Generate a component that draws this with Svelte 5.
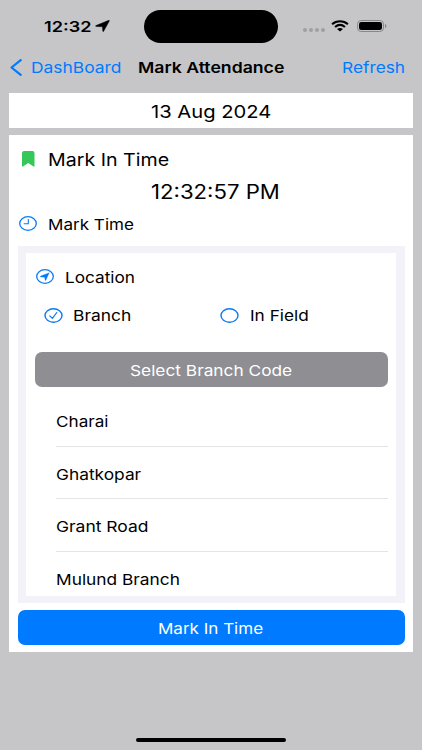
<script>
  const branches = [
    { name: 'Charai', width: 52.5 },
    { name: 'Ghatkopar', width: 85.5 },
    { name: 'Grant Road', width: 92 },
    { name: 'Mulund Branch', width: 123.5 }
  ];
  let mode = $state('branch');

  // Stretches a label horizontally so that it fills its slot.
  function fit(node, width) {
    node.style.transform = `translateY(1px) scaleX(${width / node.offsetWidth})`;
  }
</script>

{#snippet label(text, width)}
  <span class="label" style:width="{width}px"><span class="glyphs" use:fit={width}>{text}</span></span>
{/snippet}

<div class="screen">
  <header class="status">
    <div class="clock">
      {@render label('12:32', 47)}
      <svg class="arrow" width="15" height="12" viewBox="0 0 15 12"><path d="M13.7.3Q14.7 0 14.3 1L8.8 11.1Q8 12.3 7.7 10.9L7.4 6.7 1.2 6.5Q-.2 6.2 1 5.5Z" stroke="#000" stroke-width=".4" /></svg>
    </div>
    <div class="island"></div>
    <div class="signals">
      <div class="dots"><i></i><i></i><i></i><i></i></div>
      <svg class="wifi" width="18" height="12" viewBox="0 0 18 12">
        <path d="M1.1 4.2C5.5.2 12.5.2 16.9 4.2M4 7C7 4.5 11 4.5 14 7" fill="none" stroke="#000" stroke-width="2.1" />
        <path d="M6 8.9Q9 6.9 12 8.9L9 11.5Z" />
      </svg>
      <svg class="battery" width="30" height="12" viewBox="0 0 30 12">
        <rect x=".5" y=".5" width="26" height="11" rx="3.6" fill="none" stroke="#88888a" />
        <rect x="2" y="2" width="23" height="8" rx="2.3" />
        <path d="M28 4Q29.5 4.5 29.5 6T28 8Z" fill="#88888a" />
      </svg>
    </div>
  </header>

  <nav>
    <button class="back">
      <svg width="12" height="17" viewBox="0 0 12 17"><path d="M10.7 1.1 1.5 8.5 10.7 15.9" fill="none" stroke="#007aff" stroke-width="2.2" stroke-linecap="round" stroke-linejoin="round" /></svg>
      {@render label('DashBoard', 90.5)}
    </button>
    <strong>{@render label('Mark Attendance', 146)}</strong>
    <button class="refresh">{@render label('Refresh', 63.5)}</button>
  </nav>

  <section class="date">{@render label('13 Aug 2024', 120.5)}</section>

  <section class="card">
    <div class="heading">
      <svg width="13" height="16" viewBox="0 0 13 16"><path d="M0 2Q0 0 2.2 0H10.3Q12.5 0 12.5 2V15Q12.5 16.4 11.2 15.3L6.25 12 1.3 15.3Q0 16.4 0 15Z" fill="#34c759" /></svg>
      {@render label('Mark In Time', 121.5)}
    </div>
    <div class="now">{@render label('12:32:57 PM', 129)}</div>
    <div class="marktime">
      <svg width="18" height="15" viewBox="0 0 18 15"><g fill="none" stroke="#0a7bf5"><ellipse cx="9" cy="7.5" rx="8.3" ry="6.8" stroke-width="1.3" /><path d="M9.3 3.1V7.8H4.7" stroke-width="1.1" /></g></svg>
      {@render label('Mark Time', 86.5)}
    </div>

    <div class="panel">
      <div class="inner">
        <div class="location">
          <svg width="18" height="15" viewBox="0 0 18 15"><ellipse cx="9" cy="7.5" rx="8.3" ry="6.8" fill="none" stroke="#0a7bf5" stroke-width="1.3" /><path d="M13.3 3.7 9.8 11.3Q9.3 12 9.1 11.1L8.7 8.2 4.7 7.9Q3.7 7.6 4.6 7.1Z" fill="#007aff" stroke="#007aff" stroke-width=".3" /></svg>
          {@render label('Location', 70)}
        </div>
        <div class="options">
          {#each [{ id: 'branch', text: 'Branch', width: 58 }, { id: 'field', text: 'In Field', width: 58.5 }] as option}
            <button class="option" onclick={() => (mode = option.id)}>
              <svg width="19" height="15" viewBox="0 0 19 15"><g fill="none" stroke="#0a7bf5"><ellipse cx="9.5" cy="7.5" rx="8.5" ry="6.8" stroke-width="1.4" />{#if mode === option.id}<path d="M5.8 7.8 8.4 10.4 12.8 4.5" stroke-width="1.2" stroke-linecap="round" stroke-linejoin="round" />{/if}</g></svg>
              {@render label(option.text, option.width)}
            </button>
          {/each}
        </div>
        <button class="select">{@render label('Select Branch Code', 162.5)}</button>
        <ul>
          {#each branches as branch}
            <li>{@render label(branch.name, branch.width)}</li>
          {/each}
        </ul>
      </div>
    </div>
    <button class="submit">{@render label('Mark In Time', 105.5)}</button>
  </section>

  <div class="home"></div>
</div>

<style>
  :global(body) { margin: 0; }
  * { box-sizing: border-box; }
  .screen {
    width: 422px; height: 750px; overflow: hidden;
    display: flex; flex-direction: column;
    background: #c6c6c8; color: #000;
    font: 15px/20px Inter, "Liberation Sans", sans-serif;
  }
  .label { display: inline-block; flex: none; white-space: nowrap; text-align: left; }
  .glyphs { display: inline-block; transform-origin: 0 50%; }
  svg { display: block; flex: none; }
  button { border: 0; padding: 0; margin: 0; background: none; font: inherit; color: #007aff; }
  .status { height: 52px; display: flex; align-items: center; flex: none; padding-left: 43.5px; }
  .clock { width: 100.5px; display: flex; align-items: center; font-weight: 600; }
  .arrow { margin-left: 4px; }
  .island { width: 134px; height: 33px; border-radius: 17px; background: #000; }
  .signals { display: flex; align-items: center; margin-left: 25px; }
  .dots { display: flex; gap: 2px; margin-top: 8px; }
  .dots i { width: 4px; height: 4px; border-radius: 50%; background: #a0a0a2; }
  .wifi { margin-left: 6px; }
  .battery { margin-left: 8px; }
  nav { height: 30px; margin-bottom: 11px; display: flex; align-items: center; flex: none; padding-left: 10px; }
  .back { display: flex; align-items: center; gap: 9px; width: 127.5px; }
  strong { width: 204px; font-weight: 600; }
  .date {
    height: 35px; margin: 0 9px 7px; flex: none; background: #fff;
    display: flex; justify-content: center; align-items: center; font-size: 17.6px;
  }
  .card { height: 517px; margin: 0 9px; padding: 8px 8.5px 7px; flex: none; background: #fff; display: flex; flex-direction: column; }
  .heading { height: 31px; flex: none; display: flex; align-items: center; gap: 12.5px; padding-left: 4.5px; font-size: 17.6px; }
  .now { height: 34px; flex: none; display: flex; align-items: center; justify-content: center; padding-left: 8px; font-size: 19.4px; }
  .marktime { height: 31px; flex: none; display: flex; align-items: center; gap: 10.5px; padding-left: 1.5px; }
  .panel { height: 357px; margin-top: 7px; padding: 7px 8.5px; background: #f2f2f8; flex: none; }
  .inner { height: 343px; overflow: hidden; background: #fff; padding: 8px 8.5px 0; }
  .location { height: 31px; display: flex; align-items: center; gap: 11px; padding-left: 1.5px; }
  .options { height: 46px; display: flex; align-items: center; padding-left: 9px; }
  .option { width: 176.5px; flex: none; display: flex; align-items: center; gap: 10.5px; color: #000; }
  .select {
    width: 100%; height: 35px; margin-top: 14px; border-radius: 7px; background: #8e8e93; color: #fff;
    display: flex; align-items: center; justify-content: center;
  }
  ul { list-style: none; margin: 7px 0 0; padding: 0 0 0 21.5px; }
  li { height: 52.7px; display: flex; align-items: center; padding-top: 2px; border-bottom: 1px solid #e4e4e6; }
  .submit {
    height: 35px; margin-top: 7px; border-radius: 7px; background: #007aff; color: #fff; flex: none;
    display: flex; align-items: center; justify-content: center;
  }
  .home { width: 150px; height: 4px; margin: auto auto 8px; border-radius: 2px; background: #000; }
</style>
